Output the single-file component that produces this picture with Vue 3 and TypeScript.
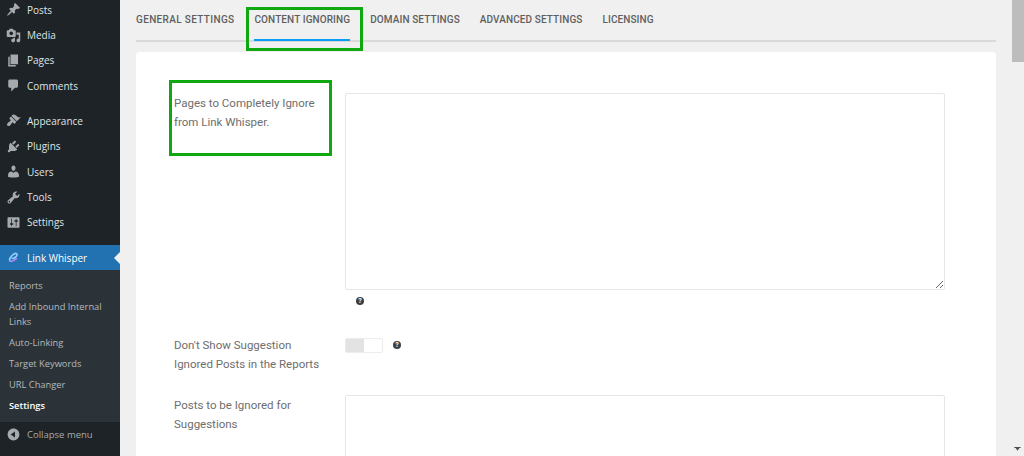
<script setup lang="ts">
interface MenuItem {
  label: string
  icon: string
  gap?: boolean
}

const menu: MenuItem[] = [
  { label: 'Posts', icon: 'M10.44 3.02l1.82-1.82 6.36 6.35-1.83 1.82c-1.05-.68-2.48-.57-3.41.36l-.75.75c-.92.93-1.04 2.35-.35 3.41l-1.83 1.82-2.41-2.41-2.8 2.79c-.42.42-3.38 2.71-3.8 2.29s1.86-3.39 2.28-3.81l2.79-2.79L4.1 9.36l1.83-1.82c1.05.69 2.48.57 3.4-.36l.75-.75c.93-.92 1.05-2.35.36-3.41z' },
  { label: 'Media', icon: 'M13 11V4c0-.55-.45-1-1-1h-1.67L9 1H5L3.67 3H2c-.55 0-1 .45-1 1v7c0 .55.45 1 1 1h10c.55 0 1-.45 1-1zM7 4.5c1.38 0 2.5 1.12 2.5 2.5S8.38 9.5 7 9.5 4.5 8.38 4.5 7 5.62 4.5 7 4.5zM14 6h5v10.5c0 1.38-1.12 2.5-2.5 2.5S14 17.88 14 16.5s1.12-2.5 2.5-2.5c.17 0 .34.02.5.05V9h-3V6zm-4 8.05V13h2v3.5c0 1.38-1.12 2.5-2.5 2.5S7 17.88 7 16.5 8.12 14 9.5 14c.17 0 .34.02.5.05z' },
  { label: 'Pages', icon: 'M6 15V2h10v13H6zm-1 1h8v2H3V5h2v11z' },
  { label: 'Comments', icon: 'M5 2h9c1.1 0 2 .9 2 2v7c0 1.1-.9 2-2 2h-2l-5 5v-5H5c-1.1 0-2-.9-2-2V4c0-1.1.9-2 2-2z' },
  { label: 'Appearance', gap: true, icon: 'M14.48 11.06L7.41 3.99l1.5-1.5c.5-.56 2.3-.47 3.51.32 1.21.8 1.43 1.28 2.91 2.1 1.18.64 2.45 1.26 4.45.85zM13.77 11.77L6.7 4.7 4.93 6.47c-.39.39-.39 1.02 0 1.41l1.06 1.06c.39.39.39 1.03 0 1.42-.6.6-1.43 1.11-2.21 1.69-.35.26-.7.53-1.01.84-1.34 1.34-1.8 2.77-1.36 3.55.9 1.1 2.6 1.4 4.2-.2.31-.31.58-.66.84-1.01.58-.78 1.09-1.61 1.69-2.21.39-.39 1.03-.39 1.42 0l1.06 1.06c.39.39 1.02.39 1.41 0z' },
  { label: 'Plugins', icon: 'M13.11 4.36L9.87 7.6 8 5.73l3.24-3.24c.35-.34 1.05-.2 1.56.32.52.51.66 1.21.31 1.55zm-8 1.77l.91-1.12 9.01 9.01-1.19.84c-.71.71-2.63 1.16-3.82 1.16H6.14L4.9 17.26c-.59.59-1.54.59-2.12 0-.59-.58-.59-1.53 0-2.12l1.24-1.24v-3.88c0-1.13.4-3.19 1.09-3.89zm7.26 3.97l3.24-3.24c.34-.35 1.04-.21 1.55.31.52.51.66 1.21.31 1.55l-3.24 3.25z' },
  { label: 'Users', icon: 'M10 9.25c-2.27 0-2.73-3.44-2.73-3.44C7 4.02 7.82 2 9.97 2c2.16 0 2.98 2.02 2.71 3.81 0 0-.41 3.44-2.68 3.44zm0 2.57L12.72 10c2.39 0 4.52 2.33 4.52 4.53v2.49s-3.65 1.13-7.24 1.13c-3.65 0-7.24-1.13-7.24-1.13v-2.49c0-2.25 1.94-4.48 4.47-4.48z' },
  { label: 'Tools', icon: 'M16.68 9.77c-1.34 1.34-3.3 1.67-4.95.99l-5.41 6.52c-.99.99-2.59.99-3.58 0s-.99-2.59 0-3.57l6.52-5.42c-.68-1.65-.35-3.61.99-4.95 1.28-1.28 3.12-1.62 4.72-1.06l-2.89 2.89 2.82 2.82 2.86-2.87c.53 1.58.18 3.39-1.08 4.65zM3.81 16.21c.4.39 1.04.39 1.43 0 .4-.4.4-1.04 0-1.43-.39-.4-1.03-.4-1.43 0-.39.39-.39 1.03 0 1.43z' },
  { label: 'Settings', icon: 'M18 16V4c0-.55-.45-1-1-1H3c-.55 0-1 .45-1 1v12c0 .55.45 1 1 1h14c.55 0 1-.45 1-1zM8 11h1c.55 0 1 .45 1 1s-.45 1-1 1H8v1.5c0 .28-.22.5-.5.5s-.5-.22-.5-.5V13H6c-.55 0-1-.45-1-1s.45-1 1-1h1V5.5c0-.28.22-.5.5-.5s.5.22.5.5V11zm5-2h-1c-.55 0-1-.45-1-1s.45-1 1-1h1V5.5c0-.28.22-.5.5-.5s.5.22.5.5V7h1c.55 0 1 .45 1 1s-.45 1-1 1h-1v5.5c0 .28-.22.5-.5.5s-.5-.22-.5-.5V9z' }
]

const submenu = ['Reports', 'Add Inbound Internal Links', 'Auto-Linking', 'Target Keywords', 'URL Changer', 'Settings']
const tabs = ['General Settings', 'Content Ignoring', 'Domain Settings', 'Advanced Settings', 'Licensing']
</script>

<template>
  <div class="page">
    <aside class="sidebar">
      <ul class="menu">
        <li v-for="item in menu" :key="item.label" class="menu-item" :class="{ 'has-gap': item.gap }">
          <svg class="menu-icon" viewBox="0 0 20 20"><path :d="item.icon" /></svg>
          {{ item.label }}
        </li>
      </ul>

      <div class="current">
        <svg class="lw-icon" viewBox="0 0 20 20" fill="none">
          <path d="M5.5 14.5C3.5 12.5 6 9.5 8.5 7c2.2-2.2 4.4-3.2 5.7-2 1.3 1.3-.2 3.3-2.2 5-1.5 1.3-3 1.7-3.6 1" stroke="#8fd0ff" stroke-width="2.2" stroke-linecap="round" />
          <path d="M5.5 14.5c1.6 1.5 4.6.3 8.5-3" stroke="#a98cf0" stroke-width="2.2" stroke-linecap="round" />
        </svg>
        Link Whisper
      </div>

      <ul class="submenu">
        <li v-for="(sub, i) in submenu" :key="sub" :class="{ active: i === submenu.length - 1 }">{{ sub }}</li>
      </ul>

      <div class="collapse">
        <svg class="menu-icon" viewBox="0 0 20 20"><path d="M10 2.16c4.33 0 7.84 3.51 7.84 7.84s-3.51 7.84-7.84 7.84S2.16 14.33 2.16 10 5.71 2.16 10 2.16zm2 11.72V6.12L6.18 9.97z" /></svg>
        Collapse menu
      </div>
    </aside>

    <main class="main">
      <nav class="tabs">
        <div v-for="(tab, i) in tabs" :key="tab" class="tab" :class="{ selected: i === 1 }">
          {{ tab }}
          <span v-if="i === 1" class="mark mark-tab"></span>
        </div>
      </nav>

      <section class="card">
        <div class="row row-first">
          <label class="label">
            Pages to Completely Ignore from Link Whisper.
            <span class="mark mark-label"></span>
          </label>
          <div class="field">
            <textarea class="area area-tall"></textarea>
            <span class="help help-below">?</span>
          </div>
        </div>

        <div class="row row-second">
          <label class="label">Don't Show Suggestion Ignored Posts in the Reports</label>
          <div class="field field-inline">
            <span class="toggle"><span class="toggle-knob"></span></span>
            <span class="help">?</span>
          </div>
        </div>

        <div class="row">
          <label class="label">Posts to be Ignored for Suggestions</label>
          <div class="field">
            <textarea class="area"></textarea>
          </div>
        </div>
      </section>
    </main>

    <div class="scrollbar">
      <div class="thumb"></div>
      <svg class="arrow" viewBox="0 0 8 5"><path d="M0 0h8v1.4H6.4L4 4.6 1.6 1.4H0z" /></svg>
    </div>
  </div>
</template>

<style>
html,
body {
  margin: 0;
  overflow: hidden;
}
</style>

<style scoped>
.page {
  display: flex;
  width: 1024px;
  height: 456px;
  overflow: hidden;
  background: #f0f0f0;
}

.sidebar {
  display: flex;
  flex-direction: column;
  flex: 0 0 120px;
  background: #1d2327;
  color: #dfe3e6;
  font-family: "Open Sans", sans-serif;
  font-size: 10px;
}

.menu,
.submenu {
  list-style: none;
  margin: 0;
  padding: 0;
}

.menu {
  margin-top: -3px;
}

.menu-item,
.current,
.collapse {
  display: flex;
  align-items: center;
  gap: 6px;
  padding-left: 6px;
}

.menu-item {
  height: 25.4px;
}

.has-gap {
  margin-top: 9.6px;
}

.menu-icon,
.lw-icon {
  flex: 0 0 15px;
  width: 15px;
  height: 15px;
}

.menu-icon {
  fill: #a7aaad;
}

.current {
  position: relative;
  height: 25px;
  margin-top: 10px;
  background: #2271b1;
  color: #fff;
}

.current::after {
  content: "";
  position: absolute;
  right: 0;
  top: 7px;
  border: 6px solid transparent;
  border-left-width: 0;
  border-right-color: #f0f0f0;
}

.submenu {
  padding: 5px 0 5.5px 9px;
  background: #2c3338;
  color: #b4b9be;
  font-size: 9.3px;
  line-height: 15px;
}

.submenu li {
  padding: 3px 8px 3px 0;
}

.submenu .active {
  color: #fff;
  font-weight: 600;
}

.collapse {
  height: 25px;
  color: #a7aaad;
  font-size: 9.5px;
}

.main {
  flex: 0 0 860px;
  margin-left: 16px;
  font-family: Roboto, sans-serif;
}

.tabs {
  display: flex;
  gap: 20px;
  height: 40px;
  border-bottom: 2px solid #d9d9d9;
  box-sizing: content-box;
}

.tab {
  position: relative;
  padding-top: 14px;
  height: 40px;
  box-sizing: border-box;
  color: #5f5f5f;
  font-size: 10px;
  font-weight: 500;
  line-height: 12px;
  letter-spacing: 0.1px;
  text-transform: uppercase;
  white-space: nowrap;
}

.tab:first-child {
  letter-spacing: 0.35px;
}

.selected {
  border-bottom: 2px solid #0b9cf5;
  height: 41px;
}

.mark {
  position: absolute;
  box-sizing: border-box;
  border: 3px solid #10a810;
  pointer-events: none;
}

.mark-tab {
  left: -8px;
  right: -13px;
  top: 7px;
  height: 44px;
}

.card {
  margin-top: 10px;
  padding: 41px 51px 0 38px;
  height: 500px;
  background: #fff;
  border-radius: 4px;
}

.row {
  display: grid;
  grid-template-columns: 171px 600px;
}

.row-first {
  height: 242px;
}

.row-second {
  height: 60px;
}

.label {
  position: relative;
  align-self: start;
  width: 155px;
  padding-top: 1px;
  color: #6e6e6e;
  font-size: 11.5px;
  line-height: 19px;
}

.mark-label {
  left: -5px;
  top: -13px;
  width: 163px;
  height: 76px;
}

.field {
  position: relative;
  min-width: 0;
}

.field-inline {
  display: flex;
  align-items: flex-start;
  gap: 10px;
  padding-top: 3px;
}

.area {
  display: block;
  width: 600px;
  height: 300px;
  box-sizing: border-box;
  margin: 0;
  background: #fff;
  border: 1px solid #e6e6e6;
  border-radius: 2px;
}

.area-tall {
  height: 197px;
}

.help {
  display: block;
  width: 8px;
  height: 8px;
  margin-top: 3px;
  border-radius: 50%;
  background: #3a3f44;
  color: #fff;
  font-size: 7px;
  font-weight: 700;
  line-height: 8px;
  text-align: center;
}

.help-below {
  margin: 7px 0 0 11px;
}

.toggle {
  display: flex;
  width: 38px;
  height: 15px;
  box-sizing: border-box;
  border: 1px solid #ececec;
  border-radius: 2px;
}

.toggle-knob {
  width: 18px;
  background: #e3e3e3;
}

.scrollbar {
  position: relative;
  flex: 0 0 12px;
  margin-left: 16px;
  background: #f0f0f0;
}

.thumb {
  height: 62px;
  background: #bdbdbd;
}

.arrow {
  position: absolute;
  left: 2px;
  bottom: 5px;
  width: 7px;
  height: 4px;
  fill: #505050;
}
</style>
